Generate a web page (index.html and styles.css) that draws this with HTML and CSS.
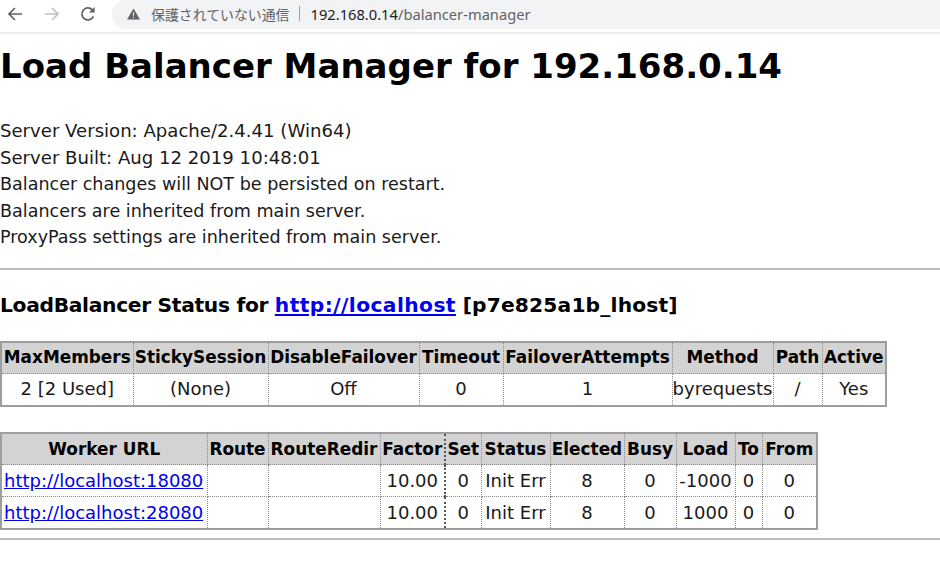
FILE: index.html
```
<!DOCTYPE html>
<html lang="ja">
<head>
<meta charset="utf-8">
<title>Balancer Manager</title>
<link rel="stylesheet" href="styles.css">
</head>
<body>
<header class="toolbar">
  <svg class="nav-icon back" viewBox="0 0 16 16"><path d="M15 8H2.5M8 2 2 8l6 6" fill="none" stroke="#5f6368" stroke-width="1.7"/></svg>
  <svg class="nav-icon forward" viewBox="0 0 16 16"><path d="M1 8h12.5M8 2l6 6-6 6" fill="none" stroke="#bfc1c4" stroke-width="1.7"/></svg>
  <svg class="nav-icon reload" viewBox="0 0 16 16"><path d="M13.4 10.4A6 6 0 1 1 12.2 3.7" fill="none" stroke="#5f6368" stroke-width="1.7"/><path d="M14.6 1v5.6H9z" fill="#5f6368"/></svg>
  <div class="omnibox">
    <svg class="warn" viewBox="0 0 14 12"><path d="M7 0 14 12H0z" fill="#5f6368"/><path d="M6.4 4h1.2v4H6.4zM6.4 9h1.2v1.3H6.4z" fill="#f1f3f4"/></svg>
    <span class="insecure">保護されていない通信</span>
    <span class="sep"></span>
    <span class="url"><span class="host">192.168.0.14</span>/balancer-manager</span>
  </div>
</header>
<main class="page">
  <h1>Load Balancer Manager for 192.168.0.14</h1>
  <dl class="info">
    <dt class="wide">Server Version: Apache/2.4.41 (Win64)</dt>
    <dt class="wide">Server Built: Aug 12 2019 10:48:01</dt>
    <dt>Balancer changes will NOT be persisted on restart.</dt>
    <dt>Balancers are inherited from main server.</dt>
    <dt>ProxyPass settings are inherited from main server.</dt>
  </dl>
  <hr class="rule-one">
  <h3>LoadBalancer Status for <a href="#">http://localhost</a> <span class="balancer-id">[p7e825a1b_lhost]</span></h3>
  <table class="status">
    <colgroup><col class="s1"><col class="s2"><col class="s3"><col class="s4"><col class="s5"><col class="s6"><col class="s7"><col class="s8"></colgroup>
    <tr><th>MaxMembers</th><th>StickySession</th><th>DisableFailover</th><th>Timeout</th><th>FailoverAttempts</th><th>Method</th><th>Path</th><th>Active</th></tr>
    <tr><td>2 [2 Used]</td><td>(None)</td><td>Off</td><td>0</td><td>1</td><td>byrequests</td><td>/</td><td>Yes</td></tr>
  </table>
  <table class="workers">
    <colgroup><col class="w1"><col class="w2"><col class="w3"><col class="w4"><col class="w5"><col class="w6"><col class="w7"><col class="w8"><col class="w9"><col class="w10"><col class="w11"></colgroup>
    <tr><th>Worker URL</th><th>Route</th><th>RouteRedir</th><th>Factor</th><th class="dark">Set</th><th>Status</th><th>Elected</th><th>Busy</th><th>Load</th><th>To</th><th>From</th></tr>
    <tr><td><a href="#">http://localhost:18080</a></td><td></td><td></td><td>10.00</td><td class="dark">0</td><td>Init Err</td><td>8</td><td>0</td><td>-1000</td><td>0</td><td>0</td></tr>
    <tr><td><a href="#">http://localhost:28080</a></td><td></td><td></td><td>10.00</td><td class="dark">0</td><td>Init Err</td><td>8</td><td>0</td><td>1000</td><td>0</td><td>0</td></tr>
  </table>
  <hr class="rule-two">
</main>
</body>
</html>
```

FILE: styles.css
```
* { box-sizing: border-box; }
html, body { margin: 0; padding: 0; }
body {
  width: 940px;
  height: 563px;
  overflow: hidden;
  background: #fff;
  color: #1a1a1a;
  font-family: "DejaVu Sans", Verdana, sans-serif;
}
.toolbar {
  display: flex;
  align-items: center;
  height: 34px;
  padding: 0 0 5px 7px;
  border-bottom: 2px solid #ececec;
}
.nav-icon { width: 16px; height: 16px; flex: none; }
.back { margin-right: 21px; }
.forward { margin-right: 20px; }
.reload { margin-right: 16px; }
.omnibox {
  display: flex;
  align-items: center;
  align-self: flex-start;
  flex: 1;
  height: 29px;
  padding: 0 0 2px 15px;
  background: #f1f3f4;
  border-radius: 14px 0 0 14px;
  font-family: "Noto Sans", "Noto Sans CJK JP", sans-serif;
  font-size: 14.7px;
  color: #5f6368;
}
.warn { width: 13px; height: 12px; flex: none; margin-right: 11px; }
.insecure { font-family: "Noto Sans CJK JP", sans-serif; font-size: 13.9px; white-space: nowrap; }
.sep { width: 1px; height: 15px; background: #9aa0a6; margin: 0 11px 0 9px; flex: none; }
.host { color: #202124; }
.url { white-space: nowrap; }
.page { display: block; }
h1 {
  margin: 0;
  padding-top: 10px;
  font-size: 34px;
  line-height: 44px;
  font-weight: 700;
  color: #000;
  white-space: nowrap;
}
.info { margin: 30px 0 0; }
.info dt {
  font-size: 17.55px;
  line-height: 26.5px;
  white-space: nowrap;
}
.info .wide { font-size: 18.1px; }
hr { border: 0; height: 2px; background: #bdbdbd; margin: 0; }
.rule-one { margin-top: 17px; }
h3 {
  margin: 21px 0 0;
  font-size: 20.25px;
  line-height: 28px;
  font-weight: 700;
  color: #000;
  white-space: nowrap;
  letter-spacing: -0.33px;
}
a { color: #0000ee; text-decoration: underline; }
h3 a { letter-spacing: 0.4px; }
.balancer-id { letter-spacing: 0.15px; }
table {
  table-layout: fixed;
  border-collapse: collapse;
  border: 2px solid #9e9e9e;
  font-size: 18px;
}
th, td {
  height: 32px;
  padding: 0 0 1px;
  text-align: center;
  white-space: nowrap;
  overflow: visible;
  border: 1px dotted #8a8a8a;
  font-weight: 400;
}
th { background: #d3d3d3; font-weight: 700; color: #000; font-size: 16.9px; }
.dark { border-left: 2px dotted #555; }
.status { margin-top: 22px; width: 885px; }
.workers { margin-top: 25px; width: 816px; }
.workers th { padding-bottom: 0; }
.workers td { padding-bottom: 0; }
.workers td:first-child { text-align: left; padding-left: 2px; }
.s1 { width: 132px; } .s2 { width: 135px; } .s3 { width: 151px; } .s4 { width: 84px; }
.s5 { width: 169px; } .s6 { width: 101px; } .s7 { width: 49px; } .s8 { width: 64px; }
.w1 { width: 206px; } .w2 { width: 61px; } .w3 { width: 112px; } .w4 { width: 65px; }
.w5 { width: 36px; } .w6 { width: 69px; } .w7 { width: 74px; } .w8 { width: 52px; }
.w9 { width: 59px; } .w10 { width: 27px; } .w11 { width: 55px; }
.rule-two { margin-top: 8px; }
```
